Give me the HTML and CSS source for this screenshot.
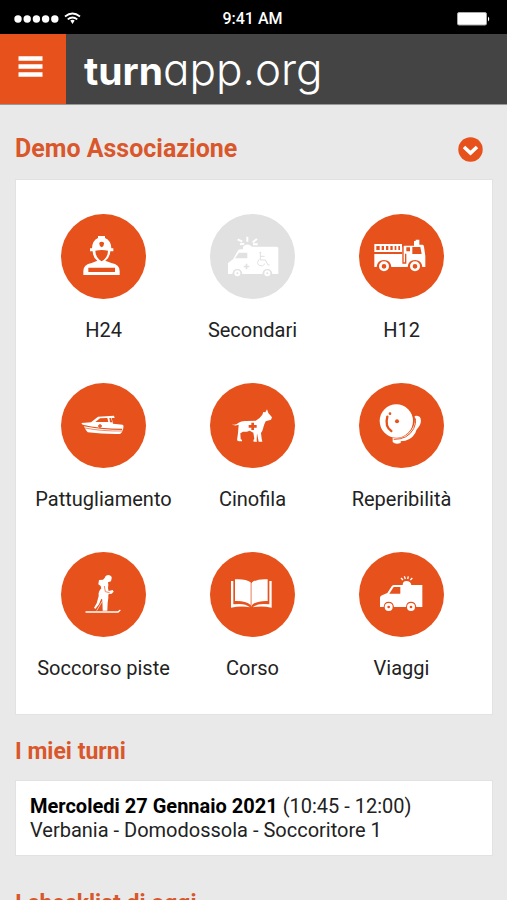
FILE: index.html
```
<!DOCTYPE html>
<html lang="it">
<head>
<meta charset="utf-8">
<meta name="viewport" content="width=device-width, initial-scale=1">
<title>turnapp.org</title>
<link rel="stylesheet" href="styles.css">
</head>
<body>
<div class="status">
  <div class="signal">
    <svg width="70" height="16" viewBox="0 0 70 16" aria-hidden="true">
      <g fill="#fff"><circle cx="4" cy="8" r="3.7"/><circle cx="13.200" cy="8" r="3.700"/><circle cx="22.400" cy="8" r="3.700"/><circle cx="31.600" cy="8" r="3.700"/><circle cx="40.800" cy="8" r="3.700"/><path d="M56.300 9.500q2.200-1.500 4.400 0L58.500 13z"/></g>
      <g fill="none" stroke="#fff" stroke-width="1.800"><path d="M51 5.500q7.500-6 15 0M53.700 8.400q4.800-3.800 9.600 0"/></g>
    </svg>
  </div>
  <time class="clock">9:41 AM</time>
  <div class="battery">
    <svg width="34" height="14" viewBox="0 0 34 14" aria-hidden="true"><rect x=".5" y=".5" width="29" height="12.500" rx="1.500" fill="#fff" stroke="#aaa"/><path d="M31 4.500q2.500 2.500 0 5z" fill="#fff"/></svg>
  </div>
</div>
<header class="topbar">
  <button class="menu" type="button" aria-label="Menu">
    <svg width="25" height="22" viewBox="0 0 25 22" aria-hidden="true"><path d="M.5 2.500h24M.5 10.500h24M.5 18.500h24" stroke="#fff" stroke-width="4.400"/></svg>
  </button>
  <a class="logo" href="#"><b>turn</b>app.org</a>
</header>
<main>
  <div class="heading">
    <h1>Demo Associazione</h1>
    <button class="toggle" type="button" aria-label="Apri elenco">
      <svg width="25" height="25" viewBox="0 0 25 25" aria-hidden="true"><circle cx="12.500" cy="12.500" r="12.200" fill="#e6511c"/><path d="M6 10l6.500 6 6.500-6" fill="none" stroke="#fff" stroke-width="3.600"/></svg>
    </button>
  </div>
  <nav class="card services">
    <a href="#" class="service">
      <svg class="badge" viewBox="5 12 255 255" aria-hidden="true">
        <path fill="#fff" d="M92 124v-9h6q1-24 18-31v-6h21v6q18 7 19 31h6v9h-9q-2 20-15 28l18 7q25 4 25 24v12H72v-12q0-20 25-24l17-7q-13-8-14-28z"/>
        <path class="cut" d="M108 122q20-4 38 0-1 19-12 27l-7 5-7-5q-11-8-12-27zM120 98q7-5 14 0 1 10-7 14-8-4-7-14zM87 173h80v13H87z"/>
      </svg>
      <span>H24</span>
    </a>
    <a href="#" class="service muted">
      <svg class="badge" viewBox="9 12 255 255" aria-hidden="true">
        <path fill="#fff" d="M63 192v-33l15-11 14-25q2-5 8-5h8v-8q13-13 27 0h74q5 0 5 5v77h-18q-2-15-15-15t-15 15h-60q-2-15-15-15t-15 15z"/>
        <path fill="none" stroke="#fff" stroke-width="6" d="M92 88l14 7M99 103l13-2M121 80v15M150 87l-13 10M152 103h-14"/>
        <circle cx="91" cy="190" r="9" fill="#fff"/><circle cx="181" cy="190" r="9" fill="#fff"/>
        <path class="cut" d="M84 145l12-17h25v17zM116 161h5v6h6v5h-6v6h-5v-6h-6v-5h6z"/>
        <path class="cutline" stroke-width="3" d="M160 130v20h15l8 15h5M160 139h13M157 148q-10 10-1 18 12 6 18-5"/><circle class="cut" cx="160" cy="128" r="3"/>
        <circle class="cut" cx="91" cy="190" r="3"/><circle class="cut" cx="181" cy="190" r="3"/>
      </svg>
      <span>Secondari</span>
    </a>
    <a href="#" class="service">
      <svg class="badge" viewBox="7 12 255 255" aria-hidden="true">
        <path fill="#fff" d="M53 102h83v6H53zM53 120h83v6H53zM53 102h6v22h-6zM130 102h6v22h-6zM53 132h84v-18q0-7 7-7h28V93h5v-4h11v15h10q3 0 4 6l4 28v33h-9q-2-21-22-21t-22 21h-49q-2-21-22-21t-22 21h-7z"/>
        <path stroke="#fff" stroke-width="6" d="M72 106v16M85 106v16M98 106v16M111 106v16M122 106v16"/>
        <path class="cut" d="M149 112h11v12h-11zM167 111h24l4 21h-28z"/>
        <path class="cutline" stroke-width="4" d="M139 103v56h8v-28"/>
        <circle cx="82" cy="169" r="11" fill="none" stroke="#fff" stroke-width="8"/><circle cx="175" cy="169" r="11" fill="none" stroke="#fff" stroke-width="8"/>
      </svg>
      <span>H12</span>
    </a>
    <a href="#" class="service">
      <svg class="badge" viewBox="5 9 255 255" aria-hidden="true">
        <path fill="#fff" d="M66 129l29-2 21-17 48-3 2 7h-9l4 17 29 3q4 1 2 10-2 14-10 18-50 1-97-5-6-6-11-18 52 11 114 11l1-4q-70 0-119-12z"/>
        <path class="cut" d="M108 126l14-11 22-1 3 12zM150 114h5l4 13h-7z"/>
        <path class="cut" d="M120 132h4v4h4v4h-4v4h-4v-4h-4v-4h4z"/>
        <path class="cutline" stroke-width="2" d="M77 144q50 10 113 9"/>
      </svg>
      <span>Pattugliamento</span>
    </a>
    <a href="#" class="service">
      <svg class="badge" viewBox="9 9 255 255" aria-hidden="true">
        <path fill="#fff" d="M74 133q12 4 21-5 8-6 22-5l29-1q13-7 20-18l3-8 6 1 5-9 4 11 11 13-3 7-16 5q-6 12-8 22-2 9-6 13l2 17 2 9h-11l-5-25-1 21 1 4h-10l-1-5 3-3-3-19-11-6q-13 5-20 3l-8 5 1 17 4 3v4H95l-5-3 3-22 2-25q-12 5-21-1z"/>
        <path class="cut" d="M133 128h8v7h8v8h-8v7h-8v-7h-8v-8h8z"/>
      </svg>
      <span>Cinofila</span>
    </a>
    <a href="#" class="service">
      <svg class="badge" viewBox="7 9 255 255" aria-hidden="true">
        <path fill="#fff" d="M174 108q14-3 18 8 3 12-6 25-8 8-10 18-14 24-44 25v5q-16 5-24-3v-15q40 2 58-24 12-19 8-39z"/>
        <circle cx="119" cy="123" r="52" class="cut"/><circle cx="119" cy="123" r="50" fill="#fff"/>
        <circle cx="121" cy="124" r="6" class="cut"/>
        <circle cx="100" cy="101" r="4" class="cut"/>
        <path class="cutline" stroke-width="7" stroke-linecap="round" d="M92 110q-8 30 12 43"/>
        <path class="cutline" stroke-width="3" d="M111 178q42 1 60-32 8-16 5-31"/>
      </svg>
      <span>Reperibilità</span>
    </a>
    <a href="#" class="service">
      <svg class="badge" viewBox="5 6 255 255" aria-hidden="true">
        <path fill="#fff" d="M136 84q2-9 12-9 10 2 9 10l-2 9-9 3 1 7-1 11 2 8 12-3 3 5-6 6-10 1q1 14-2 26l-1 24h-14l-1-33-3-3-7 17-11 14-4-4 8-13 6-22q-2-13 8-23l-2-7-7-5 2-13 12-1z"/>
        <path fill="none" stroke="#fff" stroke-width="4" stroke-linecap="round" d="M80 186h96l6-5"/>
        <path fill="none" stroke="#fff" stroke-width="2" d="M112 182l16-27 22-26"/>
        <path class="cutline" stroke-width="2" d="M135 108l3 17 13 3"/>
      </svg>
      <span>Soccorso piste</span>
    </a>
    <a href="#" class="service">
      <svg class="badge" viewBox="9 6 255 255" aria-hidden="true">
        <path fill="#fff" d="M72 93h7v70q35-5 50 9-26-5-57 1zM194 93h-7v70q-35-5-50 9 26-5 57 1zM84 88q32-2 47 9v68q-14-13-47-12zM182 88q-32-2-47 9v68q14-13 47-12z"/>
        <path fill="none" stroke="#fff" stroke-width="2" d="M133 99v70"/>
      </svg>
      <span>Corso</span>
    </a>
    <a href="#" class="service">
      <svg class="badge" viewBox="7 6 255 255" aria-hidden="true">
        <path fill="#fff" d="M70 171v-28q0-5 6-7l16-7 13-20q3-4 8-4h25q0-12 11-12 13 0 15 12h33v66h-18q-2-16-16-16t-15 16h-36q-2-16-16-16t-15 16z"/>
        <path class="cut" d="M98 131l13-20h20v20z"/>
        <circle cx="96" cy="171" r="12" fill="#fff"/><circle cx="163" cy="171" r="12" fill="#fff"/>
        <circle class="cut" cx="96" cy="171" r="4"/><circle class="cut" cx="163" cy="171" r="4"/>
        <path fill="none" stroke="#fff" stroke-width="4" d="M133 84l6 6M143 79l3 8M155 79l-2 8M167 84l-6 6"/>
      </svg>
      <span>Viaggi</span>
    </a>
  </nav>
  <h2>I miei turni</h2>
  <section class="card shift">
    <p><b>Mercoledi 27 Gennaio 2021</b> (10:45 - 12:00)</p>
    <p>Verbania - Domodossola - Soccoritore 1</p>
  </section>
  <h2 class="next">I checklist di oggi</h2>
</main>
</body>
</html>
```
FILE: styles.css
```
* { box-sizing: border-box; }
html { height: 100%; overflow: hidden; }
body {
  margin: 0;
  height: 100%;
  overflow: hidden;
  background: #e9e9e9;
  color: #222;
  font: 20px/24px Roboto, sans-serif;
}
h1, h2, p { margin: 0; }
a { color: inherit; text-decoration: none; }
button { border: 0; padding: 0; background: none; }
svg { display: block; }

.status {
  display: grid;
  grid-template-columns: 1fr auto 1fr;
  align-items: center;
  height: 34px;
  padding: 4px 16px 0 14px;
  background: #000;
  color: #fff;
}
.clock { font: 500 16px/20px Roboto, sans-serif; }
.battery { justify-self: end; }

.topbar {
  display: flex;
  height: 71px;
  background: #444;
  border-bottom: 1px solid #999;
}
.menu {
  display: flex;
  justify-content: center;
  width: 66px;
  padding: 22px 6px 0 0;
  background: #e6511c;
}
.logo {
  padding: 11px 0 0 18px;
  color: #fff;
  font: 300 44px/48px Inter, sans-serif;
  font-feature-settings: "cv11";
}
.logo b { font-size: 39px; font-weight: 700; }

main { padding: 0 14px 0 15px; }
.heading {
  display: flex;
  align-items: center;
  justify-content: space-between;
  padding: 28px 10px 14px 0;
}
h1, h2 { color: #d9572b; font-weight: 700; }
h1 { font-size: 25px; line-height: 32px; }
h2 { font-size: 23px; line-height: 28px; padding: 23px 0 14px; }
.next { padding-top: 34px; }

.card { background: #fff; border: 1px solid #e2e2e2; }
.services {
  display: grid;
  grid-template-columns: repeat(3, 1fr);
  row-gap: 41px;
  padding: 34px 16px 34px 13px;
}
.service {
  display: flex;
  flex-direction: column;
  align-items: center;
  gap: 19px;
  white-space: nowrap;
}
.badge {
  width: 85px;
  height: 85px;
  border-radius: 50%;
  background: #e6511c;
}
.cut { fill: #e6511c; }
.cutline { fill: none; stroke: #e6511c; }
.muted .badge { background: #e1e1e1; }
.muted .cut { fill: #e1e1e1; }
.muted .cutline { stroke: #e1e1e1; }

.shift { padding: 13px 14px; }
.shift b { color: #000; }
```
